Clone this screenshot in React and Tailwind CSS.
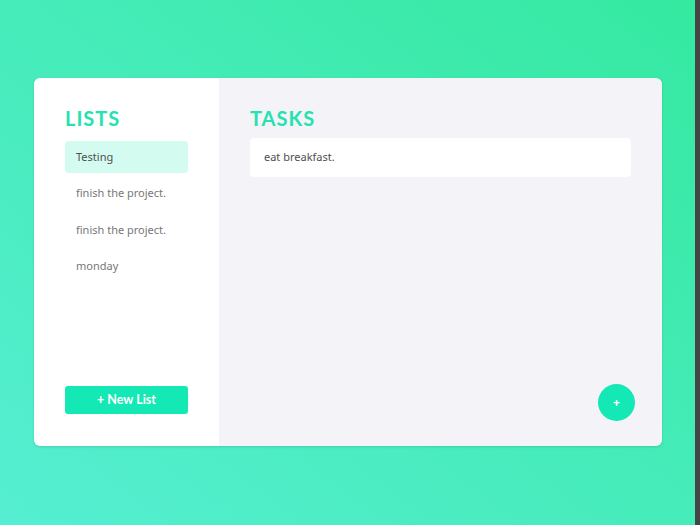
import React from "react";

const lists = ["Testing", "finish the project.", "finish the project.", "monday"];
const tasks = ["eat breakfast."];

const body = { fontFamily: '"Noto Sans", "Open Sans", sans-serif' };
const head = { fontFamily: 'Lato, "Noto Sans", sans-serif' };

const App = () => {
    return (
        <div className="flex h-[525px] w-[700px] overflow-hidden" style={body}>
            <div className="flex-1 bg-gradient-to-tr from-[#55eed2] to-[#34e9a0] pl-[34px] pt-[78px]">
                <div className="flex h-[368px] w-[628px] overflow-hidden rounded-[6px] shadow-sm">
                    {/* lists panel */}
                    <div className="flex w-[185px] flex-col bg-white px-[31px] pt-[28px] pb-[32px]">
                        <h2 className="h-[24px] text-[20px] leading-[24px] font-bold tracking-[0.05em] text-[#25e2b0]" style={head}>LISTS</h2>
                        <div className="mt-[11px] flex flex-col gap-[4.5px]">
                            {lists.map((name, i) => (
                                <div
                                    key={i}
                                    className={
                                        i === 0
                                            ? "flex h-[32px] items-center rounded-[4px] bg-[#d3fbef] px-[11px] text-[11px] text-[#505050]"
                                            : "flex h-[32px] items-center rounded-[4px] px-[11px] text-[11px] text-[#777777]"
                                    }
                                >
                                    {name}
                                </div>
                            ))}
                        </div>
                        <button className="mt-auto flex h-[28px] w-full items-center justify-center rounded-[3px] bg-[#14e8b4] text-[12.5px] font-bold text-white" style={head}>
                            + New List
                        </button>
                    </div>
                    {/* tasks panel */}
                    <div className="flex flex-1 flex-col bg-[#f3f3f8] px-[31px] pt-[28px] pb-[25px]">
                        <h2 className="h-[24px] text-[20px] leading-[24px] font-bold tracking-[0.05em] text-[#25e2b0]" style={head}>TASKS</h2>
                        <div className="mt-[8px] flex flex-col gap-[6px]">
                            {tasks.map((t, i) => (
                                <div key={i} className="flex h-[39px] items-center rounded-[4px] bg-white px-[14px] text-[11px] text-[#505050]">
                                    {t}
                                </div>
                            ))}
                        </div>
                        <button className="mt-auto mr-[-4px] flex h-[37px] w-[37px] items-center justify-center self-end rounded-full bg-[#14e8b4] text-[12px] font-bold text-white">
                            +
                        </button>
                    </div>
                </div>
            </div>
            <div className="w-[5px] bg-[#454545]" />
        </div>
    );
};

export default App;
